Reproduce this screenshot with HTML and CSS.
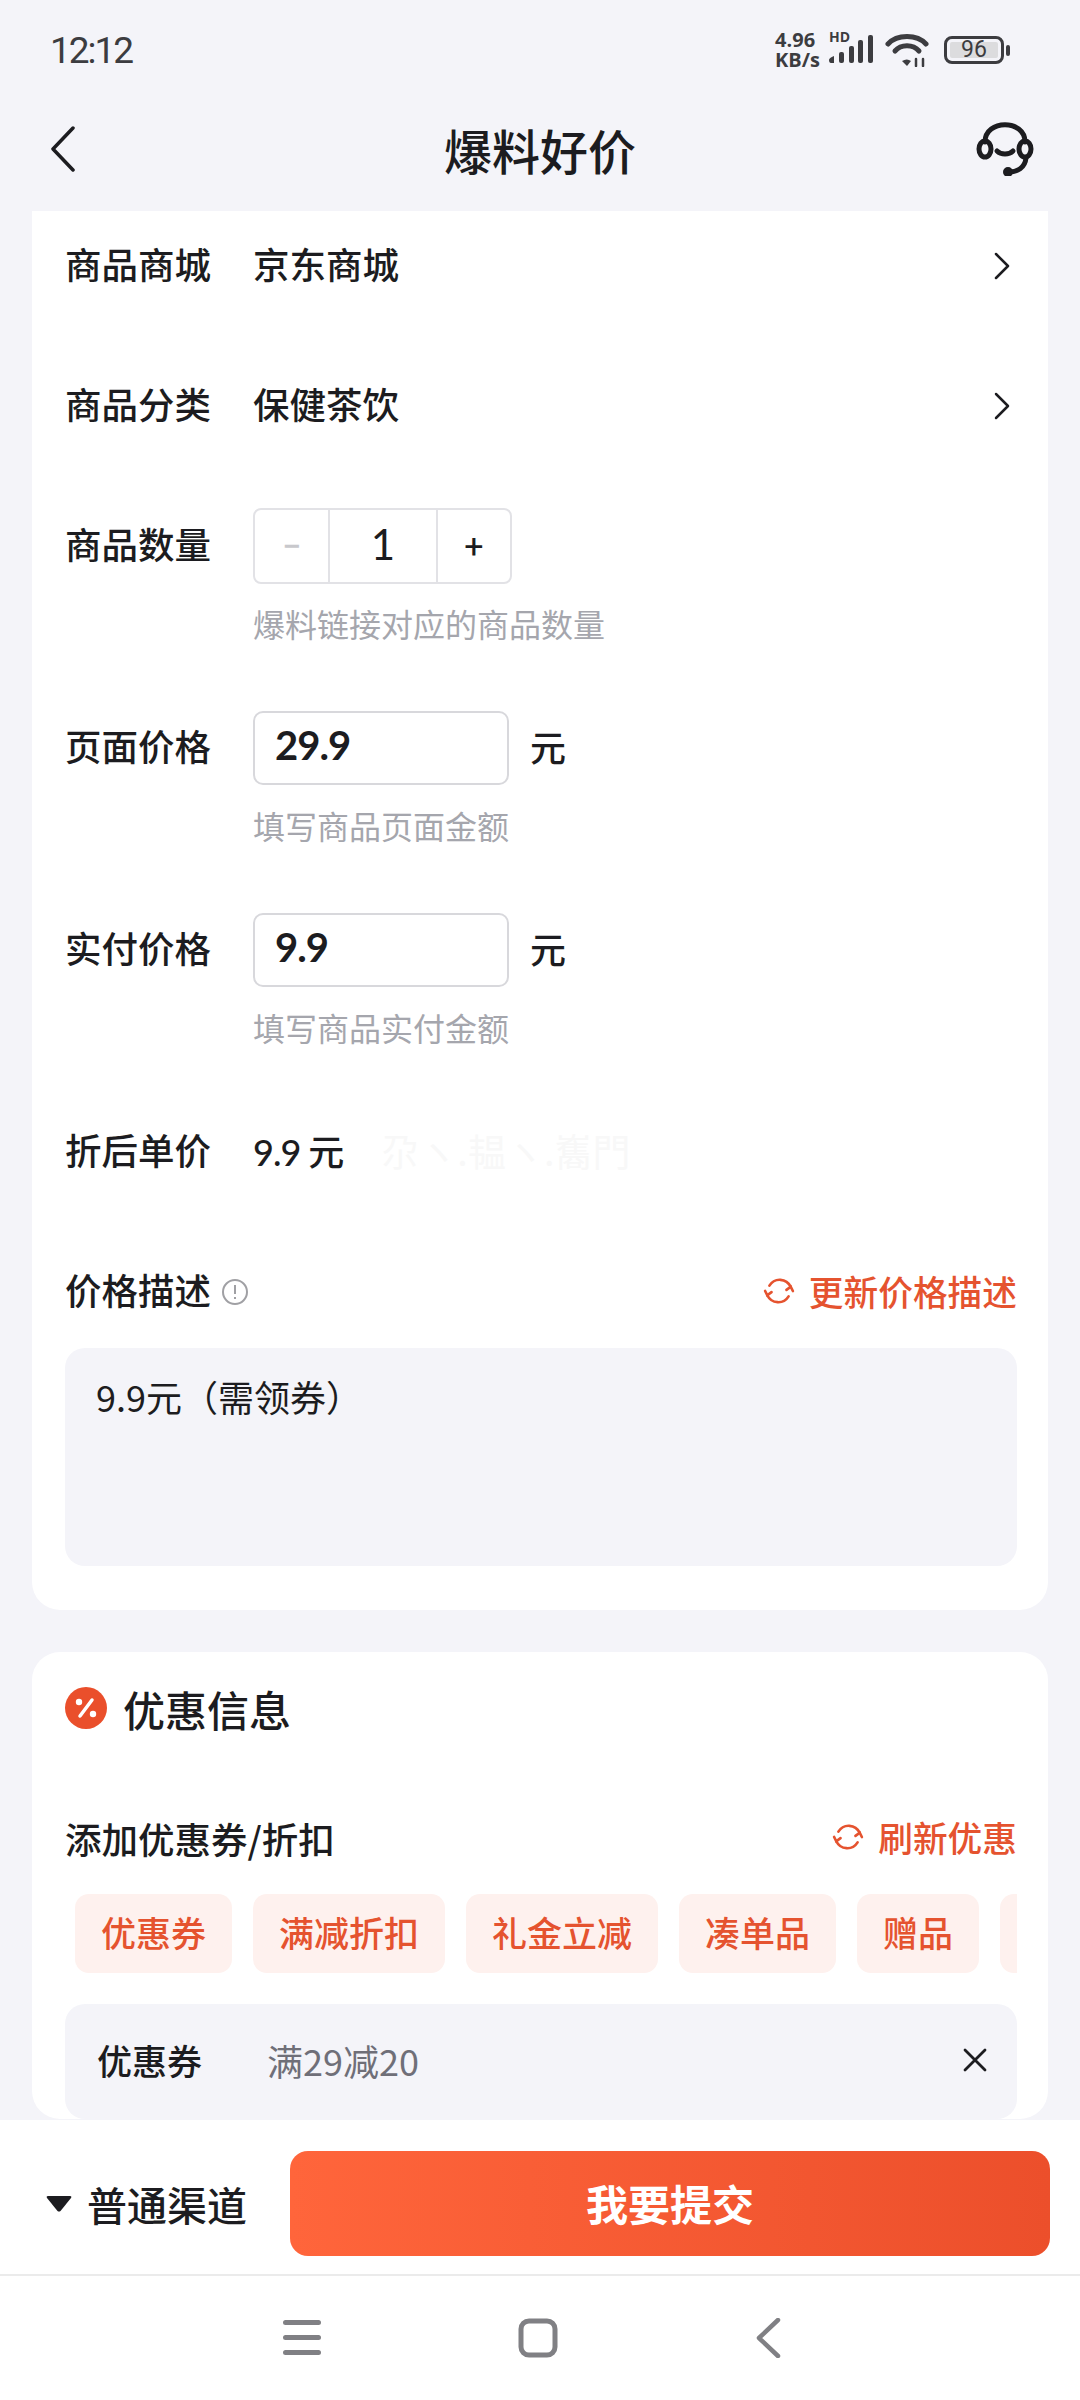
FILE: index.html

```html
<!DOCTYPE html>
<html lang="zh-CN">
<head>
  <meta charset="UTF-8" />
  <meta name="viewport" content="width=device-width, initial-scale=1.0"/>
  <title>爆料好价</title>
  <link rel="stylesheet" href="styles.css">
</head>
<body>
  <div class="screen">
    <div class="status-bar">
      <span class="time">12:12</span>
      <div class="status-icons">
        <div class="speed">4.96<br>KB/s</div>
        <div class="signal">
          <span class="hd">HD</span>
          <svg width="44" height="28" viewBox="0 0 44 28" fill="#3c3c40">
            <path d="M0 25q0-2 5-4v7h-3q-2 0-2-3z"/>
            <rect x="10" y="17" width="5" height="11" rx="2"/>
            <rect x="20" y="11" width="5" height="17" rx="2"/>
            <rect x="29" y="5" width="5" height="23" rx="2"/>
            <rect x="39" y="0" width="5" height="28" rx="2"/>
          </svg>
        </div>
        <svg class="wifi" width="44" height="34" viewBox="0 0 44 34" fill="none" stroke="#3c3c40" stroke-width="5" stroke-linecap="round">
          <path d="M3 11C12 1 32 1 41 11"/>
          <path d="M10 18C16 11 28 11 34 18"/>
          <path d="M17 28l5 5 4-5q-4-3-9 0z" fill="#3c3c40" stroke="none"/>
          <path d="M31 26v7M38 26v7" stroke-width="2.500"/>
        </svg>
        <div class="battery">
          <div class="battery-level">96</div>
        </div>
        <div class="battery-nub"></div>
      </div>
    </div>

    <div class="nav-bar">
      <div class="nav-side">
        <svg width="26" height="46" viewBox="0 0 26 46" fill="none" stroke="#1c1c20" stroke-width="3.500" stroke-linecap="round" stroke-linejoin="round">
          <path d="M23 2L3 23l20 21"/>
        </svg>
      </div>
      <h1 class="nav-title">爆料好价</h1>
      <div class="nav-side">
        <svg width="58" height="54" viewBox="0 0 58 54" fill="none" stroke="#1c1c20" stroke-width="5" stroke-linecap="round">
          <path d="M9 20C9 -3 49 -3 49 20"/>
          <ellipse cx="9" cy="27" rx="6" ry="8"/>
          <ellipse cx="49" cy="27" rx="6" ry="8"/>
          <path d="M21 29c4 4 12 4 16 0"/>
          <path d="M50 36c-1 10-9 14-17 14" />
          <circle cx="32" cy="50" r="2.500" fill="#1c1c20"/>
        </svg>
      </div>
    </div>

    <div class="content">
      <section class="card card-top">
        <div class="row">
          <span class="label">商品商城</span>
          <span class="value">京东商城</span>
          <svg class="chevron" width="16" height="28" viewBox="0 0 16 28" fill="none" stroke="#1c1c20" stroke-width="2.500" stroke-linecap="round" stroke-linejoin="round"><path d="M2 2l12 12L2 26"/></svg>
        </div>
        <div class="row">
          <span class="label">商品分类</span>
          <span class="value">保健茶饮</span>
          <svg class="chevron" width="16" height="28" viewBox="0 0 16 28" fill="none" stroke="#1c1c20" stroke-width="2.500" stroke-linecap="round" stroke-linejoin="round"><path d="M2 2l12 12L2 26"/></svg>
        </div>
        <div class="row row-hinted">
          <span class="label">商品数量</span>
          <div class="stepper">
            <span class="step step-off">−</span>
            <span class="step-num">1</span>
            <span class="step">+</span>
          </div>
        </div>
        <p class="hint">爆料链接对应的商品数量</p>
        <div class="row row-hinted">
          <span class="label">页面价格</span>
          <div class="price-input">29.9</div>
          <span class="unit">元</span>
        </div>
        <p class="hint">填写商品页面金额</p>
        <div class="row row-hinted">
          <span class="label">实付价格</span>
          <div class="price-input">9.9</div>
          <span class="unit">元</span>
        </div>
        <p class="hint">填写商品实付金额</p>
        <div class="row">
          <span class="label">折后单价</span>
          <span class="value num">9.9 元</span>
          <span class="watermark">尕ヽ.韫ヽ.雟門</span>
        </div>
        <div class="row row-head">
          <span class="label label-auto">价格描述</span>
          <svg class="info" width="28" height="28" viewBox="0 0 28 28" fill="none" stroke="#a0a0a4" stroke-width="2"><circle cx="14" cy="14" r="12"/><path d="M14 7v9M14 19v2"/></svg>
          <a class="action">
            <svg width="32" height="32" viewBox="0 0 30 30" fill="none" stroke="#e5532f" stroke-width="2.500" stroke-linecap="round"><path d="M6 10C11 2 22 3 26 11"/><path d="M24 20C19 28 8 27 4 19"/><path d="M2 15l2 4 4-3M28 15l-2-4-4 3"/></svg>
            更新价格描述
          </a>
        </div>
        <div class="desc-box">9.9元（需领券）</div>
      </section>

      <section class="card card-promo">
        <h2 class="promo-title">
          <svg width="42" height="42" viewBox="0 0 42 42">
            <circle cx="21" cy="21" r="21" fill="#ea4f2b"/>
            <path d="M27 13L15 29" stroke="#fff" stroke-width="3.500" stroke-linecap="round"/>
            <circle cx="14" cy="15" r="3.200" fill="#fff"/>
            <circle cx="28" cy="27" r="3.200" fill="#fff"/>
          </svg>
          优惠信息
        </h2>
        <div class="sub-head">
          <span>添加优惠券/折扣</span>
          <a class="action">
            <svg width="32" height="32" viewBox="0 0 30 30" fill="none" stroke="#e5532f" stroke-width="2.500" stroke-linecap="round"><path d="M6 10C11 2 22 3 26 11"/><path d="M24 20C19 28 8 27 4 19"/><path d="M2 15l2 4 4-3M28 15l-2-4-4 3"/></svg>
            刷新优惠
          </a>
        </div>
        <div class="tabs">
          <span class="tab">优惠券</span>
          <span class="tab">满减折扣</span>
          <span class="tab">礼金立减</span>
          <span class="tab">凑单品</span>
          <span class="tab">赠品</span>
          <span class="tab tab-more"></span>
        </div>
        <div class="coupon">
          <span class="coupon-name">优惠券</span>
          <span class="coupon-value">满29减20</span>
          <svg width="24" height="24" viewBox="0 0 24 24" stroke="#1c1c20" stroke-width="2.800" stroke-linecap="round"><path d="M2 2l20 20M22 2L2 22"/></svg>
        </div>
      </section>
    </div>

    <div class="action-bar">
      <div class="channel">
        <svg width="26" height="16" viewBox="0 0 26 16" fill="#1c1c20"><path d="M2 0h22q2 0 1 2L14.500 15q-1.500 1-3 0L1 2q-1-2 1-2z"/></svg>
        普通渠道
      </div>
      <button class="submit">我要提交</button>
    </div>

    <div class="system-nav">
      <svg width="38" height="36" viewBox="0 0 38 36" fill="#808084"><rect width="38" height="5" rx="2.500"/><rect y="15" width="38" height="5" rx="2.500"/><rect y="30" width="38" height="5" rx="2.500"/></svg>
      <svg width="40" height="40" viewBox="0 0 40 40" fill="none" stroke="#808084" stroke-width="5"><rect x="3" y="3" width="34" height="34" rx="8"/></svg>
      <svg width="26" height="40" viewBox="0 0 26 40" fill="none" stroke="#808084" stroke-width="4.500" stroke-linecap="round" stroke-linejoin="round"><path d="M23 2L4 20l19 18"/></svg>
    </div>
  </div>
</body>
</html>
```

FILE: styles.css

```css
* { box-sizing: border-box; }
html, body { margin: 0; padding: 0; }
body {
  font-family: "Noto Sans CJK SC", "Noto Sans", sans-serif;
  color: #1c1c20;
  background: #f4f4f9;
}
.screen {
  width: 1080px;
  height: 2400px;
  display: flex;
  flex-direction: column;
  overflow: hidden;
}

/* status bar */
.status-bar {
  height: 100px;
  display: flex;
  align-items: center;
  justify-content: space-between;
  padding: 0 70px 0 50px;
}
.time {
  font-family: Roboto, sans-serif;
  font-size: 37px;
  letter-spacing: -2px;
  color: #3c3c40;
}
.status-icons { display: flex; align-items: center; }
.speed {
  font-family: "Open Sans", sans-serif;
  font-weight: 700;
  font-size: 20px;
  line-height: 20px;
  color: #3c3c40;
}
.signal { position: relative; margin-left: 9px; padding-top: 2px; }
.hd {
  position: absolute;
  left: 0;
  top: -3px;
  font-family: "Open Sans", sans-serif;
  font-size: 14px;
  line-height: 14px;
  font-weight: 700;
  color: #3c3c40;
}
.wifi { margin-left: 12px; }
.battery {
  width: 60px;
  height: 28px;
  margin-left: 15px;
  padding: 3px;
  border: 3px solid #3c3c40;
  border-radius: 8px;
}
.battery-level {
  height: 16px;
  background: #dcdcde;
  border-radius: 2px;
  font-family: Roboto, sans-serif;
  font-size: 23px;
  line-height: 16px;
  text-align: center;
  color: #3c3c40;
}
.battery-nub {
  width: 4px;
  height: 11px;
  margin-left: 2px;
  background: #3c3c40;
  border-radius: 2px;
}

/* nav */
.nav-bar {
  height: 111px;
  display: flex;
  align-items: center;
  padding: 0 46px 14px 50px;
}
.nav-side { width: 58px; flex: none; display: flex; }
.nav-title {
  flex: 1;
  margin: 0;
  padding-right: 4px;
  text-align: center;
  font-size: 48px;
  font-weight: 500;
  line-height: 56px;
}

/* cards */
.content {
  flex: 1;
  min-height: 0;
  overflow: hidden;
  padding: 0 32px;
}
.card {
  background: #fff;
  border-radius: 28px;
  padding: 0 31px 0 33px;
}
.card-top {
  border-radius: 0 0 28px 28px;
  padding-top: 17px;
  padding-bottom: 44px;
}
.card-promo { margin-top: 42px; padding-top: 28px; }

.row {
  display: flex;
  align-items: center;
  min-height: 76px;
  margin-bottom: 64px;
}
.row-hinted { margin-bottom: 0; }
.row-head { margin-bottom: 18px; }
.label {
  width: 188px;
  flex: none;
  padding-bottom: 5px;
  font-size: 36.5px;
  font-weight: 500;
}
.label-auto { width: auto; }
.value { padding-bottom: 5px; font-size: 36.5px; font-weight: 500; }
.num { font-family: Lato, "Noto Sans CJK SC", sans-serif; font-weight: 500; font-size: 36px; letter-spacing: -1px; }
.chevron { margin-left: auto; margin-right: 7px; }
.watermark {
  margin-left: 38px;
  padding-bottom: 5px;
  font-size: 38px;
  color: #f8f8f8;
}
.hint {
  margin: 21px 0 69px 188px;
  font-size: 32px;
  line-height: 36px;
  color: #a5a6ad;
}

.stepper {
  width: 259px;
  height: 76px;
  display: flex;
  align-items: center;
  border: 2px solid #e2e2e6;
  border-radius: 8px;
}
.step {
  width: 72px;
  flex: none;
  text-align: center;
  font-family: Roboto, sans-serif;
  font-size: 34px;
}
.step-off { width: 73px; color: #c8c8cc; font-weight: 500; }
.step-num {
  flex: 1;
  height: 100%;
  text-align: center;
  font-family: Lato, sans-serif;
  font-size: 42px;
  line-height: 68px;
  border-left: 2px solid #e2e2e6;
  border-right: 2px solid #e2e2e6;
}
.price-input {
  width: 256px;
  height: 74px;
  padding-left: 20px;
  border: 2px solid #d8d8dc;
  border-radius: 10px;
  font-family: Lato, sans-serif;
  font-weight: 700;
  font-size: 40px;
  line-height: 65px;
  letter-spacing: -1px;
}
.unit { margin-left: 21px; padding-bottom: 5px; font-size: 36px; font-weight: 500; }
.info { margin-left: 10px; }
.action {
  margin-left: auto;
  display: flex;
  align-items: center;
  gap: 14px;
  padding-bottom: 2px;
  font-size: 34.7px;
  font-weight: 500;
  color: #e5532f;
}
.desc-box {
  height: 218px;
  padding: 24px 31px;
  background: #f4f4f9;
  border-radius: 20px;
  font-size: 36px;
  line-height: 48px;
}

/* promo card */
.promo-title {
  height: 56px;
  margin: 0;
  display: flex;
  align-items: center;
  gap: 16px;
  font-size: 42px;
  font-weight: 500;
}
.sub-head {
  height: 56px;
  margin-top: 74px;
  display: flex;
  align-items: center;
  font-size: 36.5px;
  font-weight: 500;
}
.tabs {
  margin-top: 28px;
  display: flex;
  gap: 21px;
  padding-left: 10px;
  overflow: hidden;
}
.tab {
  flex: none;
  height: 79px;
  padding: 0 26px;
  background: #fef1ee;
  border-radius: 14px;
  font-size: 35px;
  font-weight: 500;
  line-height: 75px;
  color: #e5532f;
}
.tab-more { width: 120px; }
.coupon {
  height: 115px;
  margin-top: 31px;
  padding: 0 30px 4px 32px;
  display: flex;
  align-items: center;
  background: #f4f4f9;
  border-radius: 20px;
}
.coupon-name { width: 170px; font-size: 35px; font-weight: 500; }
.coupon-value { flex: 1; font-size: 36px; color: #6f6f78; }

/* bottom */
.action-bar {
  height: 156px;
  flex: none;
  display: flex;
  align-items: center;
  padding: 13px 30px 0 46px;
  background: #fff;
  border-bottom: 2px solid #ebebeb;
}
.channel {
  display: flex;
  align-items: center;
  gap: 15px;
  font-size: 40px;
  font-weight: 500;
}
.submit {
  width: 760px;
  height: 105px;
  margin-left: auto;
  padding-bottom: 4px;
  border: 0;
  border-radius: 18px;
  background: linear-gradient(90deg, #ff653b, #ec4f2b);
  color: #fff;
  font-family: inherit;
  font-size: 42px;
  font-weight: 700;
}
.system-nav {
  height: 124px;
  flex: none;
  background: #fff;
  display: flex;
  align-items: center;
  padding: 0 299px 0 283px;
  justify-content: space-between;
}
```
